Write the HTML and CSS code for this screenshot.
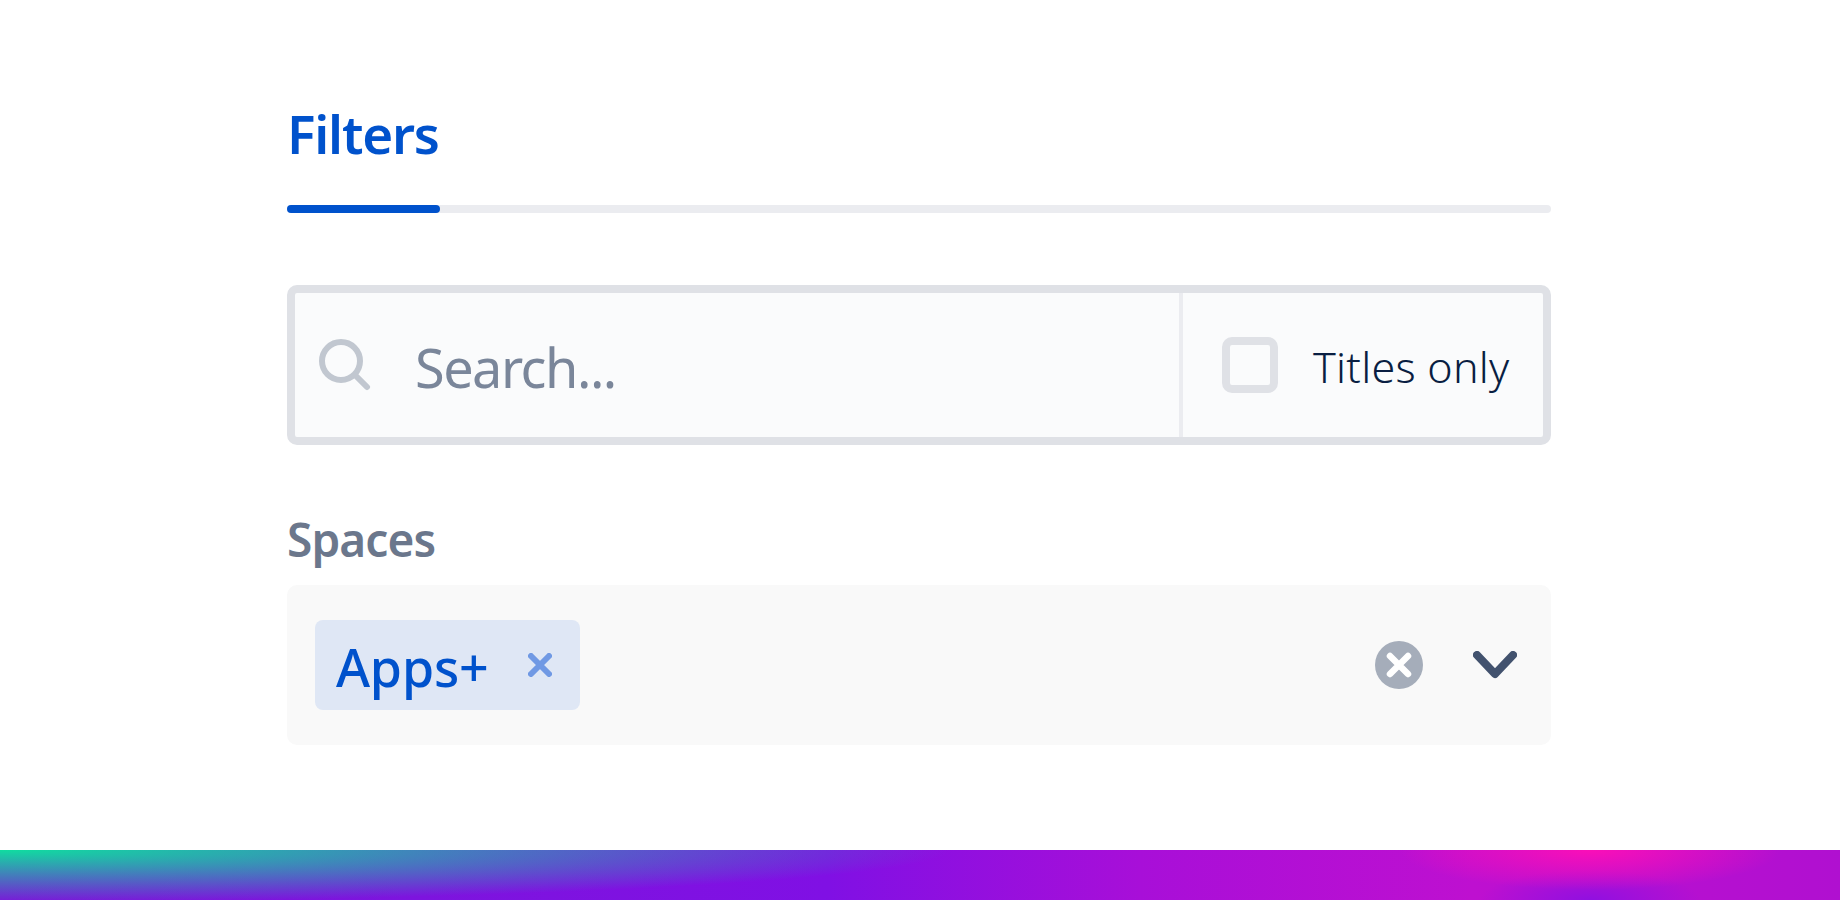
FILE: index.html
```html
<!DOCTYPE html>
<html lang="en">
<head>
    <meta charset="UTF-8">
    <meta name="viewport" content="width=device-width, initial-scale=1.0">
    <title>Filters</title>
    <link rel="stylesheet" href="styles.css">
</head>
<body>
    <main>
        <h1 class="tab-title">Filters</h1>
        <div class="tab-track"><div class="tab-active"></div></div>

        <div class="search-box">
            <div class="search-field">
                <svg class="search-icon" width="52" height="52" viewBox="0 0 52 52" fill="none">
                    <circle cx="22" cy="22" r="19" stroke="#c1c7d0" stroke-width="6"/>
                    <path d="M36 36 L48 48" stroke="#c1c7d0" stroke-width="6" stroke-linecap="round"/>
                </svg>
                <span class="search-placeholder">Search...</span>
            </div>
            <label class="titles-only">
                <span class="checkbox"></span>
                <span class="titles-label">Titles only</span>
            </label>
        </div>

        <div class="field-label">Spaces</div>
        <div class="select-box">
            <div class="tag">
                <span class="tag-text">Apps+</span>
                <svg class="tag-remove" width="24" height="24" viewBox="0 0 24 24" fill="none">
                    <path d="M3 3 L21 21 M21 3 L3 21" stroke="#7099e4" stroke-width="6" stroke-linecap="round"/>
                </svg>
            </div>
            <div class="select-icons">
                <svg width="48" height="48" viewBox="0 0 48 48">
                    <circle cx="24" cy="24" r="24" fill="#a5adba"/>
                    <path d="M15 15 L33 33 M33 15 L15 33" stroke="#fff" stroke-width="6.5" stroke-linecap="round"/>
                </svg>
                <svg width="44" height="28" viewBox="0 0 44 28" fill="none">
                    <path d="M4 4 L22 23 L40 4" stroke="#42526e" stroke-width="8" stroke-linecap="round" stroke-linejoin="round"/>
                </svg>
            </div>
        </div>
    </main>
    <footer class="gradient-bar"></footer>
</body>
</html>
```

FILE: styles.css
```css
* {
    margin: 0;
    padding: 0;
    box-sizing: border-box;
}

html, body {
    height: 100%;
}

body {
    display: flex;
    flex-direction: column;
    font-family: "Noto Sans", "Open Sans", sans-serif;
    background-color: #fff;
    overflow: hidden;
}

main {
    flex: 1;
    width: 1264px;
    margin-left: 287px;
    padding-top: 99px;
}

.tab-title {
    height: 106px;
    font-size: 53px;
    line-height: 70px;
    font-weight: 600;
    letter-spacing: -1.2px;
    color: #0052cc;
}

.tab-track {
    height: 8px;
    border-radius: 4px;
    background-color: #ebecf0;
}

.tab-active {
    width: 153px;
    height: 8px;
    border-radius: 4px;
    background-color: #0052cc;
}

.search-box {
    display: flex;
    height: 160px;
    margin-top: 72px;
    border: 8px solid #dfe1e6;
    border-radius: 10px;
    background-color: #fafbfc;
}

.search-field {
    flex: 1;
    display: flex;
    align-items: center;
    padding-left: 24px;
    border-right: 4px solid #ebecf0;
}

.search-icon {
    margin-right: 44px;
    flex-shrink: 0;
}

.search-placeholder {
    padding-top: 4px;
    font-size: 54px;
    letter-spacing: -1.5px;
    color: #7a869a;
}

.titles-only {
    display: flex;
    align-items: center;
    width: 360px;
    padding-left: 39px;
}

.checkbox {
    width: 56px;
    height: 56px;
    margin-right: 35px;
    border: 8px solid #dfe1e6;
    border-radius: 10px;
}

.titles-label {
    padding-top: 2px;
    font-size: 43px;
    font-weight: 300;
    letter-spacing: 0.25px;
    color: #091e42;
}

.field-label {
    margin-top: 58px;
    height: 82px;
    font-size: 46px;
    line-height: 72px;
    font-weight: 600;
    letter-spacing: -0.9px;
    color: #6b778c;
}

.select-box {
    display: flex;
    align-items: center;
    justify-content: space-between;
    height: 160px;
    padding: 0 34px 0 28px;
    border-radius: 10px;
    background-color: #f9f9f9;
}

.tag {
    display: flex;
    align-items: center;
    justify-content: space-between;
    width: 265px;
    height: 90px;
    padding: 0 28px 0 21px;
    border-radius: 8px;
    background-color: #dfe7f5;
}

.tag-text {
    padding-top: 2px;
    font-size: 52px;
    font-weight: 500;
    letter-spacing: -0.2px;
    color: #0052cc;
}

.select-icons {
    display: flex;
    align-items: center;
    gap: 50px;
}

.gradient-bar {
    flex-shrink: 0;
    height: 50px;
    background:
        radial-gradient(ellipse 190px 40px at 1590px 0, #fa0fb8, transparent),
        radial-gradient(ellipse 110px 30px at 1590px 100%, #9010e0, transparent),
        radial-gradient(ellipse 950px 52px at 0 0, #10dca0, transparent),
        linear-gradient(90deg, #7a18d8 0, #8010e4 45%, #a80fd8 62%, #be10d0 80%, #b010d0 100%);
}
```
